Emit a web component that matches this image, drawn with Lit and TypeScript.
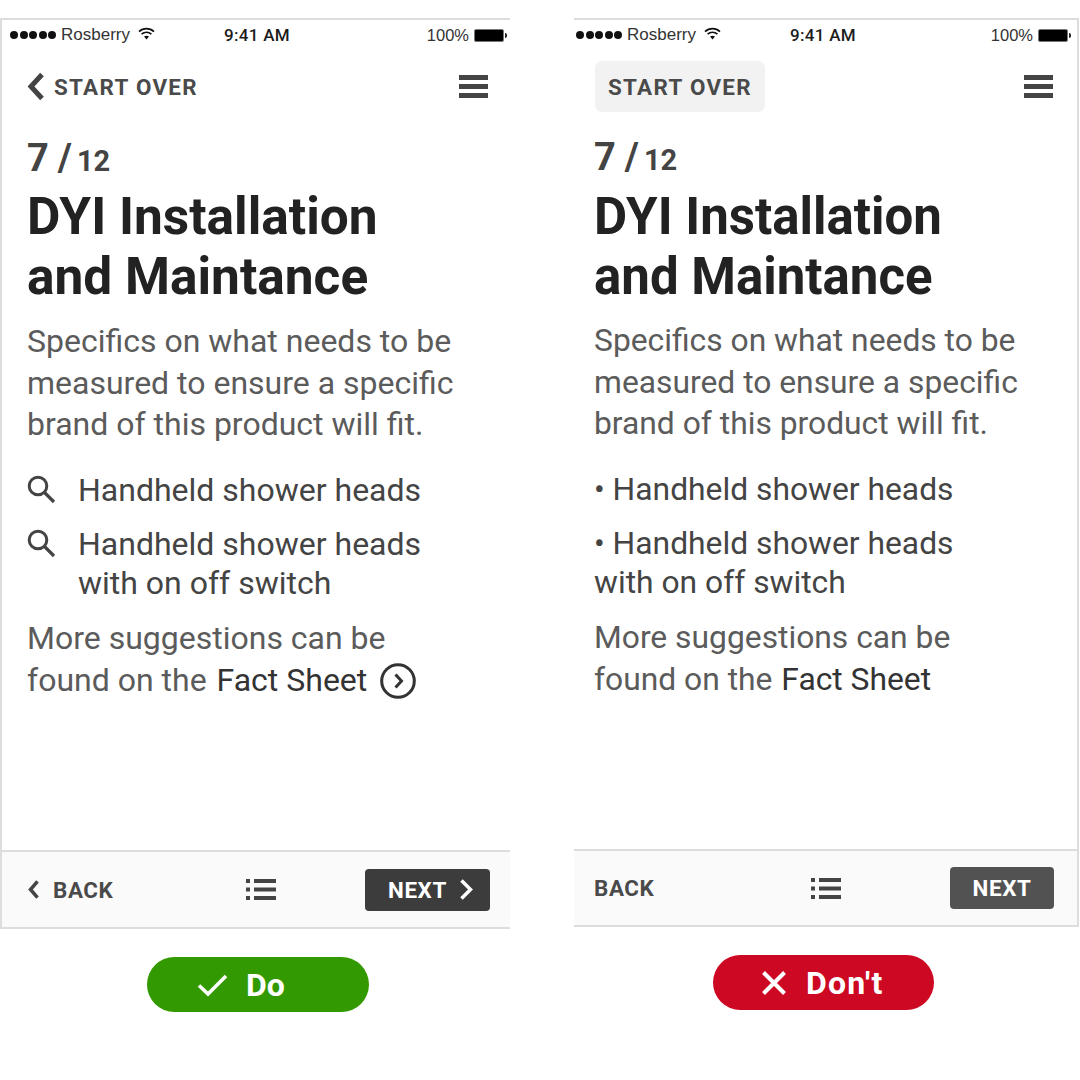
import { LitElement, html, css, svg } from 'lit';
import { customElement } from 'lit/decorators.js';

const wifi = html`<svg class="wifi" width="17" height="13" viewBox="0 0 17 13">
  <path d="M1 4.600C5.200 .6 11.800 .6 16 4.600" fill="none" stroke="#111" stroke-width="1.700"/>
  <path d="M3.600 7.200C6.400 4.600 10.600 4.600 13.400 7.200" fill="none" stroke="#111" stroke-width="1.700"/>
  <path d="M6 9.600C7.400 8.300 9.600 8.300 11 9.600L8.500 12.400Z" fill="#111"/>
</svg>`;

const burger = html`<svg width="29" height="23" viewBox="0 0 29 23">
  <path d="M0 0h29v5H0zM0 9h29v5H0zM0 18h29v5H0z" fill="#444"/>
</svg>`;

const listIcon = html`<svg class="list" width="30" height="21" viewBox="0 0 30 21">
  <path d="M0 0h4v4H0zM0 8.500h4v4H0zM0 17h4v4H0zM8 0h22v4H8zM8 8.500h22v4H8zM8 17h22v4H8z" fill="#444"/>
</svg>`;

const search = svg`<circle cx="11" cy="11" r="8.800" fill="none" stroke="#444" stroke-width="3"/>
  <path d="M17.500 17.500L27 27" fill="none" stroke="#444" stroke-width="3.200"/>`;

const chevron = (w: number, h: number, sw: number, dir: 'l' | 'r', color: string) => html`
  <svg width=${w} height=${h} viewBox="0 0 ${w} ${h}">
    <path d=${dir === 'l'
      ? `M${w - sw} ${sw * 0.7}L${sw} ${h / 2}L${w - sw} ${h - sw * 0.7}`
      : `M${sw} ${sw * 0.7}L${w - sw} ${h / 2}L${sw} ${h - sw * 0.7}`}
      fill="none" stroke=${color} stroke-width=${sw}/>
  </svg>`;

@customElement('app-root')
export class AppRoot extends LitElement {
  static styles = css`
    :host {
      display: block;
      width: 1080px;
      height: 1080px;
      background: #fff;
      font-family: Roboto, sans-serif;
      overflow: hidden;
    }
    .page {
      display: flex;
      gap: 64px;
      padding-top: 18px;
    }
    .col {
      display: flex;
      flex-direction: column;
      align-items: center;
    }
    .col.do { width: 510px; }
    .col.dont { width: 505px; }

    .phone {
      box-sizing: border-box;
      width: 100%;
      display: flex;
      flex-direction: column;
      border-top: 2px solid #ddd;
    }
    .do .phone { height: 911px; border-left: 2px solid #ddd; }
    .dont .phone { height: 909px; border-right: 2px solid #ddd; }

    .status {
      display: flex;
      align-items: center;
      height: 28px;
      padding-top: 1px;
      font-family: 'Liberation Sans', sans-serif;
      font-size: 17px;
      color: #333;
      position: relative;
    }
    .do .status { padding-left: 8px; padding-right: 3px; }
    .dont .status { padding-left: 2px; padding-right: 6px; }
    .dots { display: flex; gap: 1.500px; margin-right: 5px; }
    .dots i { width: 8px; height: 8px; border-radius: 50%; background: #111; }
    .wifi { margin: -3px 0 0 8px; }
    .time {
      position: absolute;
      font-family: Roboto, sans-serif;
      font-weight: 500;
      font-size: 17px;
      letter-spacing: 0.300px;
      color: #1c1c1c;
    }
    .do .time { left: 222px; }
    .dont .time { left: 216px; }
    .right { margin-left: auto; display: flex; align-items: center; gap: 5px; font-size: 16.500px; }
    .batt {
      position: relative;
      display: block;
      width: 28px;
      height: 11px;
      border: 1px solid #777;
      border-radius: 2px;
      background: #000;
      margin-right: 3px;
    }
    .batt::after {
      content: '';
      position: absolute;
      right: -4px;
      top: 3px;
      width: 2px;
      height: 5px;
      border-radius: 0 2px 2px 0;
      background: #222;
    }

    .top {
      display: flex;
      align-items: center;
      justify-content: space-between;
      height: 51px;
      margin-top: 12px;
      padding-right: 22px;
    }
    .do .top { padding-left: 24px; }
    .dont .top { padding-left: 21px; padding-right: 24px; }
    .over {
      display: flex;
      align-items: center;
      gap: 7px;
      font-size: 22.400px;
      font-weight: 700;
      letter-spacing: 1.300px;
      color: #4a4a4a;
    }
    .dont .over {
      height: 51px;
      padding: 0 13px;
      background: #f2f2f2;
      border-radius: 7px;
    }

    .body { flex: 1; }
    .do .body { padding: 26px 0 0 25px; }
    .dont .body { padding: 25px 0 0 20px; }
    .count {
      display: flex;
      align-items: baseline;
      height: 40px;
      color: #444;
      font-weight: 700;
      line-height: 40px;
    }
    .count b { font-size: 38px; font-weight: 700; }
    .count span { font-size: 38px; font-weight: 700; margin: 0 5px 0 9px; }
    .count em { font-size: 29px; font-style: normal; font-weight: 700; }
    h1 {
      line-height: 60px;
      font-weight: 700;
      color: #222;
    }
    .do h1 { margin: 9px 0 0; font-size: 51.400px; }
    .dont h1 { margin: 10px 0 0; font-size: 51px; }
    .lead, .more {
      line-height: 41.500px;
      color: #5b5b5b;
    }
    .do .lead { margin: 14px 0 0; }
    .dont .lead { margin: 13px 0 0; }
    .do .lead, .do .more, .do ul { font-size: 32px; }
    .dont .lead, .dont .more, .dont ul { font-size: 31.800px; }
    ul {
      list-style: none;
      margin: 25.500px 0 0;
      padding: 0;
      color: #444;
      line-height: 39px;
      display: flex;
      flex-direction: column;
      gap: 15px;
    }
    .do li { display: flex; gap: 22px; }
    .do li svg { flex: none; margin-top: 4px; }
    .more { margin: 15px 0 0; }
    .more strong { font-weight: 400; color: #333; }
    .do .more strong { margin-left: 2px; }
    .dont .more strong { margin-left: 1px; }
    .fact { display: inline-flex; align-items: center; gap: 13px; }
    .fact svg { margin-top: 1px; }

    .bar {
      box-sizing: border-box;
      display: grid;
      grid-template-columns: 1fr auto 1fr;
      align-items: center;
      background: #fafafa;
      border-top: 2px solid #ddd;
      border-bottom: 2px solid #ddd;
      font-size: 22.400px;
      font-weight: 700;
      letter-spacing: 0.600px;
    }
    .do .bar { height: 79px; padding: 0 20px 0 25px; }
    .dont .bar { height: 78px; padding: 0 23px 0 20px; }
    .list { margin-left: 4px; }
    .back { display: flex; align-items: center; gap: 12px; color: #4a4a4a; }
    .next {
      box-sizing: border-box;
      justify-self: end;
      display: flex;
      align-items: center;
      gap: 11px;
      height: 42px;
      border-radius: 4px;
      color: #fff;
    }
    .do .next { width: 125px; padding-left: 23px; background: #3c3c3c; }
    .dont .next { width: 104px; justify-content: center; background: #525252; }

    .pill {
      box-sizing: border-box;
      display: flex;
      align-items: center;
      height: 55px;
      margin-top: 28px;
      border-radius: 28px;
      color: #fff;
      font-size: 32px;
      font-weight: 700;
    }
    .do .pill { width: 222px; margin-left: 6px; padding-left: 50px; gap: 18px; background: #339900; }
    .dont .pill { width: 221px; margin-right: 6px; padding-left: 48px; gap: 19px; letter-spacing: 1.200px; background: #cc0823; }
  `;

  private phone(kind: 'do' | 'dont') {
    const isDo = kind === 'do';
    return html`
      <div class="col ${kind}">
        <div class="phone">
          <div class="status">
            <span class="dots"><i></i><i></i><i></i><i></i><i></i></span>
            Rosberry ${wifi}
            <span class="time">9:41 AM</span>
            <span class="right">100%<span class="batt"></span></span>
          </div>
          <div class="top">
            <div class="over">
              ${isDo ? chevron(21, 31, 5, 'l', '#444') : ''}START OVER
            </div>
            ${burger}
          </div>
          <div class="body">
            <div class="count"><b>7</b><span>/</span><em>12</em></div>
            <h1>DYI Installation<br />and Maintance</h1>
            <p class="lead">Specifics on what needs to be<br />measured to ensure a specific<br />brand of this product will fit.</p>
            <ul>
              ${isDo
                ? html`
                    <li><svg width="29" height="29" viewBox="0 0 29 29">${search}</svg><span>Handheld shower heads</span></li>
                    <li><svg width="29" height="29" viewBox="0 0 29 29">${search}</svg><span>Handheld shower heads<br />with on off switch</span></li>`
                : html`
                    <li>• Handheld shower heads</li>
                    <li>• Handheld shower heads<br />with on off switch</li>`}
            </ul>
            <p class="more">
              More suggestions can be<br />
              found on the
              ${isDo
                ? html`<span class="fact"><strong>Fact Sheet</strong>
                    <svg width="36" height="36" viewBox="0 0 36 36">
                      <circle cx="18" cy="18" r="16.300" fill="none" stroke="#333" stroke-width="3"/>
                      <path d="M15.500 11.500L21.500 18L15.500 24.500" fill="none" stroke="#333" stroke-width="3"/>
                    </svg></span>`
                : html`<strong>Fact Sheet</strong>`}
            </p>
          </div>
          <div class="bar">
            <div class="back">${isDo ? chevron(14, 21, 3.5, 'l', '#444') : ''}BACK</div>
            ${listIcon}
            <div class="next">NEXT${isDo ? chevron(16, 23, 3.5, 'r', '#fff') : ''}</div>
          </div>
        </div>
        <div class="pill">
          ${isDo
            ? html`<svg width="31" height="24" viewBox="0 0 31 24"><path d="M2 12.500L11 21L29 3" fill="none" stroke="#fff" stroke-width="3.600"/></svg>Do`
            : html`<svg width="26" height="26" viewBox="0 0 26 26"><path d="M2.500 2.500L23.500 23.500M23.500 2.500L2.500 23.500" fill="none" stroke="#fff" stroke-width="4"/></svg>Don't`}
        </div>
      </div>`;
  }

  render() {
    return html`<div class="page">${this.phone('do')}${this.phone('dont')}</div>`;
  }
}
